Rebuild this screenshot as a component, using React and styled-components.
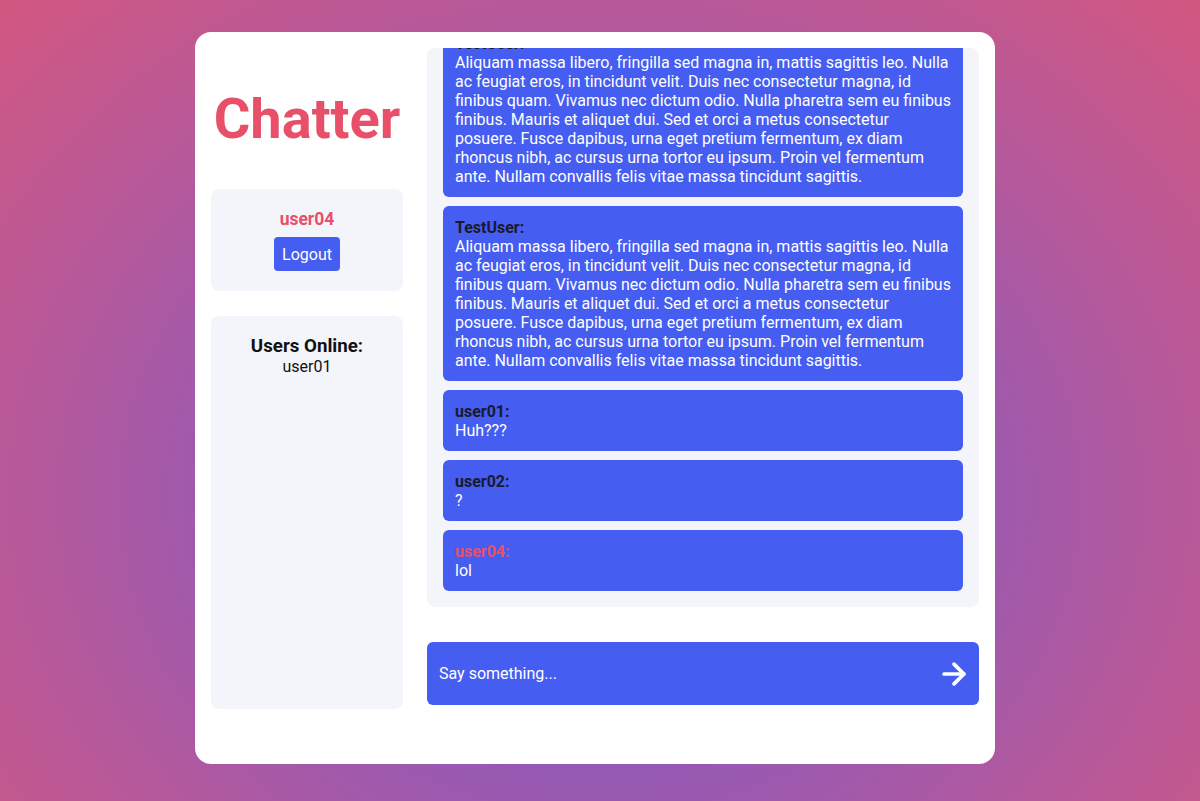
import React from "react";
import styled, { createGlobalStyle } from "styled-components";
import { ArrowRight } from "lucide-react";

const GlobalStyle = createGlobalStyle`
  html, body { margin: 0; padding: 0; height: 100%; }
  body {
    font-family: Roboto, "Noto Sans", Arial, sans-serif;
    background: radial-gradient(ellipse 75% 95% at 50% 62%, #7a5bc9 0%, #8e5ab9 30%, #b4599c 62%, #d9577a 100%);
    background-attachment: fixed;
    min-height: 100vh;
  }
`;

const Page = styled.div`
  display: flex;
  justify-content: center;
  padding: 32px 10px 0 0;
  box-sizing: border-box;
  min-height: 100vh;
`;

const Card = styled.main`
  width: 800px;
  height: 732px;
  box-sizing: border-box;
  background: #ffffff;
  border-radius: 16px;
  padding: 16px;
  display: grid;
  grid-template-columns: 192px 552px;
  column-gap: 24px;
  align-items: start;
`;

const Sidebar = styled.aside`
  display: flex;
  flex-direction: column;
`;

const Title = styled.h1`
  margin: 37.5px 0;
  font-size: 56px;
  font-weight: 700;
  color: #e8506a;
  text-align: center;
  line-height: normal;
`;

const Panel = styled.section`
  background: #f4f5fa;
  border-radius: 8px;
  padding: 20px 12px;
  box-sizing: border-box;
  display: flex;
  flex-direction: column;
  align-items: center;
  height: ${(p) => p.$h}px;
  margin-bottom: ${(p) => p.$mb || 0}px;
`;

const CurrentUser = styled.div`
  font-size: 17.5px;
  font-weight: 700;
  color: #e8506a;
  line-height: 21px;
  margin-bottom: 7px;
`;

const Button = styled.button`
  background: #455df0;
  color: #ffffff;
  border: none;
  border-radius: 4px;
  font-family: Roboto, Arial, sans-serif;
  font-size: 16px;
  padding: 0 8px;
  height: 34px;
  cursor: pointer;
`;

const PanelHeading = styled.div`
  font-size: 18.72px;
  font-weight: 700;
  color: #111111;
  line-height: 21px;
`;

const OnlineUser = styled.div`
  font-size: 16px;
  color: #111111;
  line-height: 19px;
`;

const ChatColumn = styled.section`
  display: flex;
  flex-direction: column;
`;

const MessageList = styled.div`
  height: 559px;
  box-sizing: border-box;
  background: #f4f5fa;
  border-radius: 8px;
  padding: 16px;
  display: flex;
  flex-direction: column;
  justify-content: flex-end;
  gap: 9px;
  overflow: hidden;
`;

const Bubble = styled.div`
  flex-shrink: 0;
  background: #455df0;
  border-radius: 6px;
  padding: 11.5px 12px;
  color: #ffffff;
  font-size: 16px;
  line-height: 19px;
`;

const Author = styled.div`
  font-weight: 700;
  color: ${(p) => (p.$me ? "#e8506a" : "#1a1a2c")};
`;

const InputBar = styled.form`
  margin-top: 35px;
  height: 63px;
  background: #455df0;
  border-radius: 6px;
  display: flex;
  align-items: center;
  padding: 0 8px 0 12px;
  box-sizing: border-box;
`;

const Input = styled.input`
  flex: 1;
  background: transparent;
  border: none;
  outline: none;
  padding: 0;
  color: #ffffff;
  font-family: Roboto, Arial, sans-serif;
  font-size: 16px;
  &::placeholder { color: #ffffff; opacity: 1; }
`;

const SendButton = styled.button`
  background: transparent;
  border: none;
  padding: 0;
  color: #ffffff;
  display: flex;
  align-items: center;
  cursor: pointer;
`;

const lorem =
  "Aliquam massa libero, fringilla sed magna in, mattis sagittis leo. Nulla ac feugiat eros, in tincidunt velit. Duis nec consectetur magna, id finibus quam. Vivamus nec dictum odio. Nulla pharetra sem eu finibus finibus. Mauris et aliquet dui. Sed et orci a metus consectetur posuere. Fusce dapibus, urna eget pretium fermentum, ex diam rhoncus nibh, ac cursus urna tortor eu ipsum. Proin vel fermentum ante. Nullam convallis felis vitae massa tincidunt sagittis.";

const messages = [
  { user: "TestUser", text: lorem },
  { user: "TestUser", text: lorem },
  { user: "user01", text: "Huh???" },
  { user: "user02", text: "?" },
  { user: "user04", text: "lol", me: true },
];

export default function App() {
  return (
    <>
      <GlobalStyle />
      <Page>
        <Card>
          <Sidebar>
            <Title>Chatter</Title>
            <Panel $h={102} $mb={25}>
              <CurrentUser>user04</CurrentUser>
              <Button>Logout</Button>
            </Panel>
            <Panel $h={393}>
              <PanelHeading>Users Online:</PanelHeading>
              <OnlineUser>user01</OnlineUser>
            </Panel>
          </Sidebar>
          <ChatColumn>
            <MessageList>
              {messages.map((m, i) => (
                <Bubble key={i}>
                  <Author $me={m.me}>{m.user}:</Author>
                  <div>{m.text}</div>
                </Bubble>
              ))}
            </MessageList>
            <InputBar onSubmit={(e) => e.preventDefault()}>
              <Input placeholder="Say something..." />
              <SendButton type="submit" aria-label="Send">
                <ArrowRight size={34} strokeWidth={2.6} />
              </SendButton>
            </InputBar>
          </ChatColumn>
        </Card>
      </Page>
    </>
  );
}
